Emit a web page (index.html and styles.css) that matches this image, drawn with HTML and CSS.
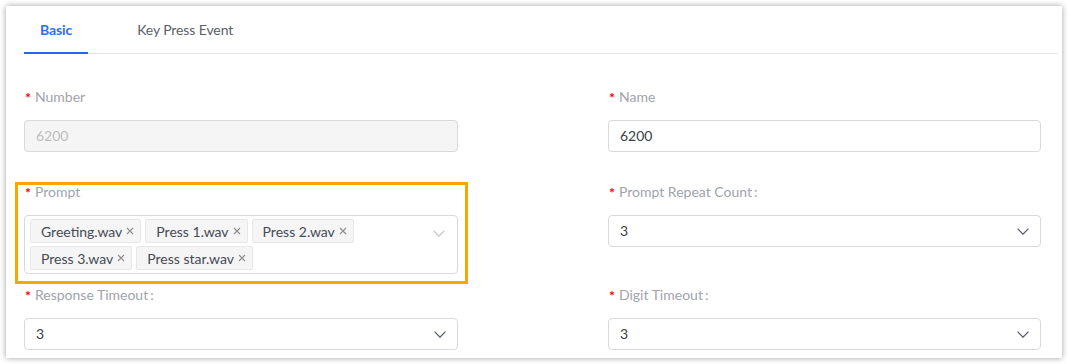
FILE: index.html
```html
<!DOCTYPE html>
<html lang="en">
<head>
<meta charset="utf-8">
<title>IVR</title>
<link rel="stylesheet" href="styles.css">
</head>
<body>
<div class="card">
  <div class="tabs">
    <div class="tab active">Basic</div>
    <div class="tab">Key Press Event</div>
  </div>
  <div class="form">
    <div class="item row1">
      <div class="label"><span class="req">*</span>Number</div>
      <div class="input disabled">6200</div>
    </div>
    <div class="item row1">
      <div class="label"><span class="req">*</span>Name</div>
      <div class="input">6200</div>
    </div>
    <div class="item row2">
      <div class="label"><span class="req">*</span>Prompt</div>
      <div class="multi">
        <div class="tags">
          <span class="tag">Greeting.wav<svg class="x" viewBox="0 0 8 8"><path d="M1 1L7 7M7 1L1 7"/></svg></span>
          <span class="tag">Press 1.wav<svg class="x" viewBox="0 0 8 8"><path d="M1 1L7 7M7 1L1 7"/></svg></span>
          <span class="tag">Press 2.wav<svg class="x" viewBox="0 0 8 8"><path d="M1 1L7 7M7 1L1 7"/></svg></span>
          <span class="tag">Press 3.wav<svg class="x" viewBox="0 0 8 8"><path d="M1 1L7 7M7 1L1 7"/></svg></span>
          <span class="tag">Press star.wav<svg class="x" viewBox="0 0 8 8"><path d="M1 1L7 7M7 1L1 7"/></svg></span>
        </div>
        <svg class="chev light" viewBox="0 0 12 7"><path d="M0.6 0.6L6 6.2L11.4 0.6"/></svg>
      </div>
    </div>
    <div class="item row2">
      <div class="label"><span class="req">*</span>Prompt Repeat Count<span class="colon">:</span></div>
      <div class="input select">3<svg class="chev" viewBox="0 0 12 7"><path d="M0.6 0.6L6 6.2L11.4 0.6"/></svg></div>
    </div>
    <div class="item">
      <div class="label"><span class="req">*</span>Response Timeout<span class="colon">:</span></div>
      <div class="input select">3<svg class="chev" viewBox="0 0 12 7"><path d="M0.6 0.6L6 6.2L11.4 0.6"/></svg></div>
    </div>
    <div class="item">
      <div class="label"><span class="req">*</span>Digit Timeout<span class="colon">:</span></div>
      <div class="input select">3<svg class="chev" viewBox="0 0 12 7"><path d="M0.6 0.6L6 6.2L11.4 0.6"/></svg></div>
    </div>
  </div>
  <div class="highlight"></div>
</div>
</body>
</html>
```
FILE: styles.css
```css
* { box-sizing: border-box; }
html, body { margin: 0; background: #ffffff; }
body {
  padding: 6px;
  font-family: Lato, "Noto Sans", sans-serif;
  font-size: 14px;
  color: #333;
}
.card {
  position: relative;
  width: 1056px;
  height: 352px;
  overflow: hidden;
  background: #fff;
  box-shadow: 0 0 6px rgba(0, 0, 0, 0.38);
  padding: 0 4px 0 18px;
}
.tabs {
  display: flex;
  gap: 33px;
  height: 48px;
  border-bottom: 1px solid #e4e4e4;
}
.tab {
  display: flex;
  align-items: center;
  padding: 0 16px;
  color: #5a5f69;
  position: relative;
  letter-spacing: -0.1px;
}
.tab.active {
  color: #2a6ef5;
  font-weight: 700;
}
.tab.active::after {
  content: "";
  position: absolute;
  left: 0;
  right: 0;
  bottom: -1px;
  height: 2px;
  background: #1f6bff;
}
.form {
  margin-top: 27px;
  display: grid;
  grid-template-columns: 434px 433px;
  column-gap: 150px;
  align-items: start;
}
.item.row1 { margin-bottom: 24px; }
.item.row2 { margin-bottom: 5px; }
.label {
  height: 32px;
  line-height: 32px;
  color: #9fa3ab;
  margin-bottom: 7px;
  white-space: nowrap;
}
.req {
  color: #f00;
  font-size: 14px;
  font-weight: 700;
  margin: 0 4px 0 1px;
  position: relative;
  top: 1px;
}
.colon { margin-left: 2px; }
.input {
  height: 32px;
  border: 1px solid #d9d9d9;
  border-radius: 4px;
  padding: 0 11px;
  line-height: 30px;
  color: #3a3f4a;
  background: #fff;
  display: flex;
  align-items: center;
  justify-content: space-between;
}
.input.disabled {
  background: #f5f5f5;
  color: #bdbdbd;
}
.chev {
  width: 12px;
  height: 7px;
  fill: none;
  stroke: #5a6070;
  stroke-width: 1.3;
}
.chev.light { stroke: #c8c8c8; }
.multi {
  height: 59px;
  border: 1px solid #d9d9d9;
  border-radius: 4px;
  padding: 3px 12px 3px 5px;
  display: flex;
  align-items: flex-start;
  justify-content: space-between;
}
.multi .chev { margin-top: 11px; }
.tags {
  display: flex;
  flex-wrap: wrap;
  column-gap: 4px;
  row-gap: 3px;
  width: 340px;
}
.tag {
  height: 24px;
  display: inline-flex;
  align-items: center;
  border: 1px solid #e8e8e8;
  background: #f5f5f5;
  border-radius: 2px;
  padding: 0 6px 0 10px;
  color: #454a55;
  white-space: nowrap;
}
.tag .x {
  width: 8px;
  height: 8px;
  margin-left: 4px;
  stroke: #8c8c8c;
  stroke-width: 1.1;
  fill: none;
}
.highlight {
  position: absolute;
  left: 9px;
  top: 176px;
  width: 453px;
  height: 102px;
  border: 3px solid #f7a800;
  pointer-events: none;
}
```
